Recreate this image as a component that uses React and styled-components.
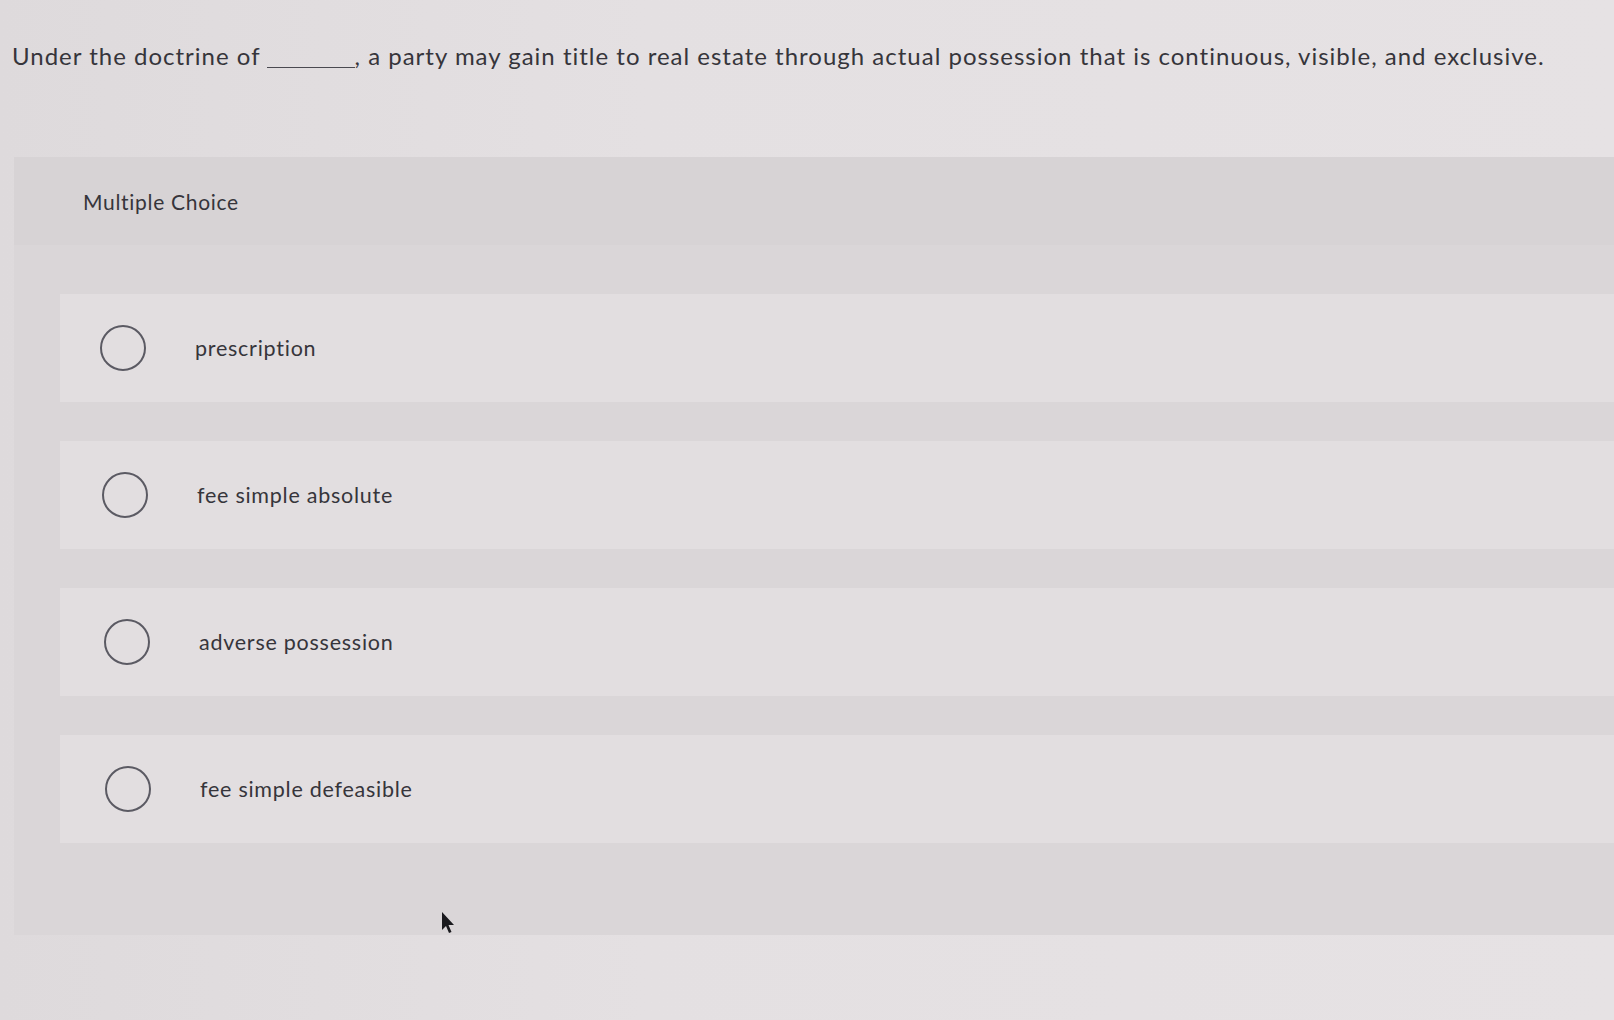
import React from "react";
import styled, { createGlobalStyle } from "styled-components";

const GlobalStyle = createGlobalStyle`
  html, body {
    margin: 0;
    padding: 0;
    background: #e3dfe1;
  }
  body {
    font-family: Lato, "Open Sans", "Liberation Sans", sans-serif;
    color: #36353b;
    overflow: hidden;
  }
`;

const Page = styled.div`
  position: relative;
  width: 1614px;
  height: 1020px;
  background: linear-gradient(90deg, #dedadc 0%, #e4e0e2 40%, #e6e2e4 100%);
`;

const Question = styled.p`
  margin: 0;
  padding: 38px 0 0 12px;
  font-size: 24px;
  letter-spacing: 1px;
  line-height: 36px;
  white-space: nowrap;
`;

const Blank = styled.span`
  display: inline-block;
  width: 88px;
  border-bottom: 1.5px solid #4a4950;
  margin: 0 0 0 6px;
  vertical-align: -3px;
`;

const Panel = styled.section`
  margin: 83px 0 0 14px;
  height: 778px;
  background: #dad6d8;
`;

const PanelHeader = styled.div`
  height: 88px;
  display: flex;
  align-items: center;
  padding-left: 69px;
  font-size: 21px;
  letter-spacing: 0.7px;
  background: #d7d3d5;
`;

const Options = styled.div`
  display: flex;
  flex-direction: column;
  gap: 39px;
  padding: 49px 0 0 46px;
`;

const Card = styled.label`
  height: 108px;
  display: flex;
  align-items: center;
  padding-left: ${(p) => p.$indent}px;
  background: #e2dee0;
`;

const Radio = styled.span`
  width: 42px;
  height: 42px;
  border-radius: 50%;
  border: 2px solid #5b5a63;
  flex-shrink: 0;
`;

const OptionText = styled.span`
  margin-left: 49px;
  font-size: 21.5px;
  letter-spacing: 0.75px;
`;

const Cursor = styled.svg`
  position: absolute;
  left: 441px;
  top: 911px;
`;

const options = [
  { text: "prescription", indent: 40 },
  { text: "fee simple absolute", indent: 42 },
  { text: "adverse possession", indent: 44 },
  { text: "fee simple defeasible", indent: 45 },
];

export default function App() {
  return (
    <Page>
      <GlobalStyle />
      <Question>
        Under the doctrine of<Blank />, a party may gain title to real estate
        through actual possession that is continuous, visible, and exclusive.
      </Question>
      <Panel>
        <PanelHeader>Multiple Choice</PanelHeader>
        <Options>
          {options.map((o) => (
            <Card key={o.text} $indent={o.indent}>
              <Radio />
              <OptionText>{o.text}</OptionText>
            </Card>
          ))}
        </Options>
      </Panel>
      <Cursor width="14" height="24" viewBox="0 0 14 24">
        <path d="M1 1 L1 19 L5 15 L8 22 L10.5 21 L7.5 14 L13 14 Z" fill="#1a1a1e" />
      </Cursor>
    </Page>
  );
}
